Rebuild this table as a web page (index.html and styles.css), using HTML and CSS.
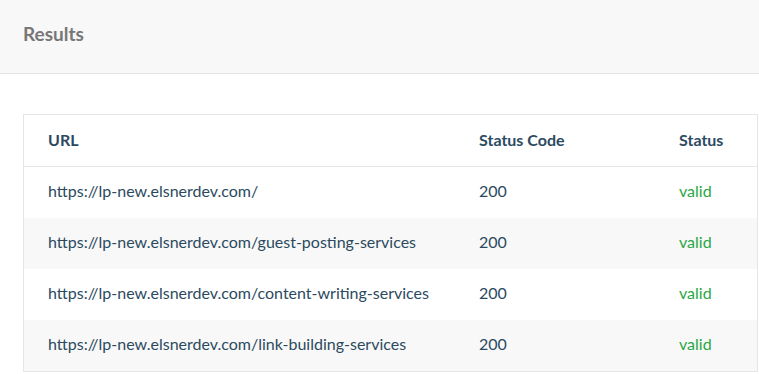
FILE: index.html
```html
<!DOCTYPE html>
<html>
<head>
  <meta name="viewport" content="width=device-width, initial-scale=1">
  <link rel="stylesheet" href="styles.css">
</head>
<body>
  <div class="pageHeader">
    <h2>Results</h2>
  </div>

  <div class="content">
    <table class="results">
      <thead>
        <tr>
          <th class="colUrl">URL</th>
          <th class="colCode">Status Code</th>
          <th class="colStatus">Status</th>
        </tr>
      </thead>
      <tbody>
        <tr>
          <td>https://lp-new.elsnerdev.com/</td>
          <td>200</td>
          <td class="valid">valid</td>
        </tr>
        <tr>
          <td>https://lp-new.elsnerdev.com/guest-posting-services</td>
          <td>200</td>
          <td class="valid">valid</td>
        </tr>
        <tr>
          <td>https://lp-new.elsnerdev.com/content-writing-services</td>
          <td>200</td>
          <td class="valid">valid</td>
        </tr>
        <tr>
          <td>https://lp-new.elsnerdev.com/link-building-services</td>
          <td>200</td>
          <td class="valid">valid</td>
        </tr>
      </tbody>
    </table>
  </div>
</body>
</html>
```

FILE: styles.css
```css
html, body {
  margin: 0;
  padding: 0;
  background-color: #fff;
  font-family: Lato, "Liberation Sans", sans-serif;
}

.pageHeader {
  background-color: #f8f8f8;
  border-bottom: 1px solid #e4e4e4;
  height: 74px;
  padding: 0 23px;
  box-sizing: border-box;
  display: flex;
  align-items: center;
}

.pageHeader h2 {
  margin: 0 0 7px 0;
  font-size: 19px;
  font-weight: bold;
  color: #777;
}

.content {
  padding: 40px 0 0 23px;
}

.results {
  width: 735px;
  border-collapse: collapse;
  border: 1px solid #e6e6e6;
  color: #2b4a60;
  font-size: 16px;
}

.results th {
  text-align: left;
  font-weight: bold;
  height: 49px;
  padding: 0 24px 2px 24px;
  border-bottom: 1px solid #e6e6e6;
}

.results td {
  height: 47px;
  padding: 0 24px 4px 24px;
}

.results tbody tr:nth-child(even) {
  background-color: #f8f8f8;
}

.colUrl {
  width: 383px;
}

.colCode {
  width: 152px;
}

.valid {
  color: #28a745;
}
```
